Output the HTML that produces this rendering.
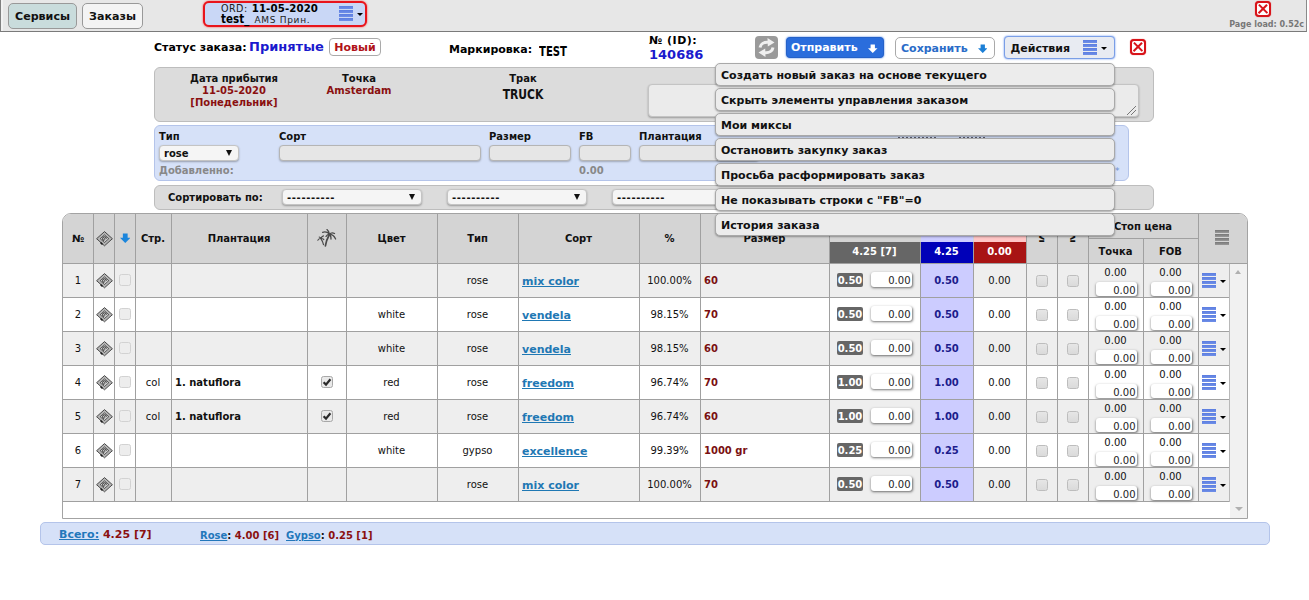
<!DOCTYPE html>
<html lang="ru"><head><meta charset="utf-8"><title>Заказ 140686</title>
<style>
*{box-sizing:border-box}
html,body{margin:0;padding:0;background:#fff;width:1309px;height:600px;overflow:hidden}
body{font-family:"DejaVu Sans","Liberation Sans",sans-serif;font-size:11px;color:#000;position:relative}
.abs{position:absolute}
b,.b{font-weight:bold}
#topbar{left:0;top:0;width:1307px;height:32px;background:#e7e7e7;border-bottom:1px solid #7a7a7a;border-right:1px solid #8a8a8a;border-left:1px solid #808080;box-shadow:inset 2px 0 0 #f2f2f2}
.tbtn{top:2.500px;height:26px;border:1px solid #999;border-radius:5px;font-weight:bold;font-size:11.1px;line-height:25px;text-align:center;color:#111}
#ordtab{left:203px;top:1px;width:164px;height:26px;border:2px solid #e8141c;border-radius:6px;background:#c9d7f6;box-shadow:0 0 2px #f33}
.menuic{width:14px;height:15px;background:repeating-linear-gradient(#5b7de0 0,#6f8fe8 3px,transparent 3px,transparent 4px)}
.arr{width:0;height:0;border-left:3px solid transparent;border-right:3px solid transparent;border-top:3.600px solid #000}
.xic{width:16px;height:16px;border:2px solid #d8141a;border-radius:4px;background:#fff;box-shadow:0 0 1px #d33}
.xic:before,.xic:after{content:"";position:absolute;left:5.100px;top:0.250px;width:1.800px;height:11.500px;background:#d8141a;transform:rotate(45deg)}
.xic:after{transform:rotate(-45deg)}
.panel{background:#dcdcdc;border:1px solid #bdbdbd;border-radius:6px}
.inp{background:#e6e6e6;border:1px solid #b5b5b5;border-radius:4px;box-shadow:0 1px 2px rgba(0,0,0,.25);height:16px}
.sel{background:#f5f5f5;border:1px solid #c4c4c4;border-radius:4px;box-shadow:0 1px 2px rgba(0,0,0,.3);height:16px;font-size:10px;font-weight:bold;line-height:15.500px;padding-left:4px;color:#111}
.sel i{position:absolute;right:6px;top:4px;width:0;height:0;border-left:3px solid transparent;border-right:3px solid transparent;border-top:6px solid #111}
.lbl{font-weight:bold;font-size:10px;color:#111}
.mi{left:715px;width:400px;height:22.500px;background:#ececec;border:1px solid #a9a9a9;border-radius:5px;box-shadow:0 1px 2px rgba(0,0,0,.35);font-weight:bold;font-size:11px;line-height:23px;padding-left:5px;color:#111}

.hd{font-weight:bold;font-size:10px;line-height:12px;text-align:center;color:#111}
.c{font-size:10px;line-height:12px;text-align:center;color:#111}
.cb{width:12px;height:12px;background:linear-gradient(#e6e6e6,#dadada);border:1px solid #bdbdbd;border-radius:2.500px}
.lnk{font-weight:bold;font-size:11px;line-height:16px;color:#1f78b4;text-decoration:underline}
.bdg{width:26px;height:14px;background:#666;border-radius:2px;color:#fff;font-weight:bold;font-size:10px;line-height:15.500px;text-align:center;overflow:hidden}
.ti{width:41px;height:14.500px;background:#fff;border-radius:3px;box-shadow:0.500px 1px 2.500px rgba(0,0,0,.55);font-size:10px;line-height:17px;text-align:right;padding-right:1px;color:#222;overflow:hidden}
</style></head><body>
<div id="topbar" class="abs"></div>
<div class="abs tbtn" style="left:8px;width:69px;background:#c9dcdc">Сервисы</div>
<div class="abs tbtn" style="left:82px;width:61px;background:#f4f4f4">Заказы</div>
<div id="ordtab" class="abs"></div>
<div class="abs" style="left:221px;top:3px;font-size:9.600px;line-height:12px;color:#222;white-space:nowrap"><span style="letter-spacing:.45px">ORD:</span> <b style="font-size:10.200px;color:#000;letter-spacing:.12px;margin-left:1px">11-05-2020</b></div>
<div class="abs" style="left:221px;top:12px;font-size:11.500px;line-height:14px;color:#000;white-space:nowrap"><b style="font-family:'DejaVu Sans Condensed','DejaVu Sans',sans-serif">test_</b> <span style="font-size:9px;letter-spacing:.7px;color:#222;margin-left:1.500px">AMS Прин.</span></div>
<div class="abs menuic" style="left:339px;top:6px"></div>
<div class="abs arr" style="left:356.500px;top:12.500px"></div>
<div class="abs xic" style="left:1255px;top:1px"></div>
<div class="abs b" style="left:1200px;width:104px;text-align:right;top:20px;font-size:8px;line-height:10px;color:#777">Page load: 0.52с</div>

<!-- status line -->
<div class="abs b" style="left:154px;top:41px;font-size:11px;line-height:14px">Статус заказа:</div>
<div class="abs b" style="left:249px;top:39px;font-size:13px;line-height:16px;color:#1a1acd">Принятые</div>
<div class="abs b" style="left:329px;top:38px;width:52px;height:18px;border:1px solid #aaa;border-radius:4px;background:#fff;color:#b01218;font-size:11px;line-height:17px;text-align:center">Новый</div>
<div class="abs b" style="left:449px;top:43px;font-size:11px;line-height:14px">Маркировка:</div>
<div class="abs b" style="left:539px;top:42.500px;font-size:11px;line-height:14px;font-family:'DejaVu Sans Condensed','DejaVu Sans',sans-serif;transform:scale(1.02,1.3);transform-origin:0 0">TEST</div>
<div class="abs b" style="left:649px;top:34px;font-size:11px;letter-spacing:.5px;line-height:14px">№ (ID):</div>
<div class="abs b" style="left:649px;top:47px;font-size:13px;line-height:16px;color:#1a1acd">140686</div>
<div class="abs" style="left:755px;top:36px;width:23px;height:23px;background:#9a9a9a;border-radius:4px"></div>
<svg class="abs" style="left:755px;top:36px" width="23" height="23" viewBox="0 0 23 23"><g fill="none" stroke="#f0f0f0" stroke-width="3"><path d="M5 11.500C5.500 8 9 6 13 6.300"/><path d="M18 11.500C17.500 15 14 17 10 16.700"/></g><path d="M12.500 2L19.500 6.500 12.800 10.500zM10.500 21L3.500 16.500 10.200 12.500z" fill="#f0f0f0"/></svg>
<div class="abs b" style="left:786px;top:37px;width:98px;height:21px;background:#2a6ddc;border:1px solid #2561c8;border-radius:4px;color:#fff;font-size:11px;line-height:20px;padding-left:4px;box-shadow:0 0 2px #2a6ddc">Отправить</div>
<svg class="abs" style="left:868px;top:44px" width="9.500" height="9.500" viewBox="0 0 11 11"><path d="M3 0.500h5v4.500h3L5.500 10.500 0 5h3z" fill="#fff"/></svg>
<div class="abs b" style="left:895px;top:36.500px;width:100px;height:22px;background:#fff;border:1px solid #aaa;border-radius:5px;color:#2a6cc8;font-size:11px;line-height:22px;padding-left:5px">Сохранить</div>
<svg class="abs" style="left:977.500px;top:43.500px" width="9.500" height="9.500" viewBox="0 0 11 11"><path d="M3 0.500h5v4.500h3L5.500 10.500 0 5h3z" fill="#1c7fd6"/></svg>
<div class="abs b" style="left:1004px;top:36px;width:111px;height:23px;background:#e8ebf2;border:1px solid #7a9ee6;border-radius:4px;color:#111;font-size:11px;line-height:23px;padding-left:5.500px;box-shadow:0 0 2px #5b8cf0">Действия</div>
<div class="abs menuic" style="left:1083px;top:40px"></div>
<div class="abs arr" style="left:1101px;top:46.500px"></div>
<div class="abs xic" style="left:1130px;top:39px"></div>

<!-- panel 1 -->
<div class="abs panel" style="left:154px;top:67px;width:1000px;height:54.500px"></div>
<div class="abs b" style="left:174px;top:73px;width:120px;text-align:center;font-size:10px;line-height:12px;color:#111">Дата прибытия<br><span style="color:#8a1010">11-05-2020<br>[Понедельник]</span></div>
<div class="abs b" style="left:299px;top:73px;width:120px;text-align:center;font-size:10px;line-height:12px;color:#111">Точка<br><span style="color:#8a1010">Amsterdam</span></div>
<div class="abs b" style="left:463px;top:73px;width:120px;text-align:center;font-size:10px;line-height:12px;color:#111">Трак<br><span style="display:inline-block;font-size:12px;line-height:18px;font-family:'DejaVu Sans Condensed','DejaVu Sans',sans-serif;transform:scaleY(1.2);transform-origin:50% 3px;position:relative;top:-1px">TRUCK</span></div>
<div class="abs" style="left:648px;top:84px;width:491px;height:33px;background:#ebebeb;border:1px solid #c4c4c4;border-radius:4px;box-shadow:0 1px 2px rgba(0,0,0,.3)"></div>
<svg class="abs" style="left:1126px;top:105px" width="11" height="11" viewBox="0 0 11 11"><path d="M10 1L1 10M10 5L5 10" stroke="#777" stroke-width="1" fill="none"/></svg>

<!-- panel 2 -->
<div class="abs" style="left:154px;top:125px;width:975px;height:55.500px;background:#d6e1f8;border:1px solid #b4c4ea;border-radius:6px"></div>
<div class="abs lbl" style="left:159px;top:131px;line-height:12px">Тип</div>
<div class="abs lbl" style="left:279px;top:131px;line-height:12px">Сорт</div>
<div class="abs lbl" style="left:489px;top:131px;line-height:12px">Размер</div>
<div class="abs lbl" style="left:579px;top:131px;line-height:12px">FB</div>
<div class="abs lbl" style="left:639px;top:131px;line-height:12px">Плантация</div>
<div class="abs sel" style="left:159px;top:145px;width:80px">rose<i></i></div>
<div class="abs inp" style="left:279px;top:145px;width:202px"></div>
<div class="abs inp" style="left:489px;top:145px;width:82px"></div>
<div class="abs inp" style="left:579px;top:145px;width:52px"></div>
<div class="abs inp" style="left:639px;top:145px;width:120px"></div>
<div class="abs lbl" style="left:159px;top:165px;line-height:12px;color:#888">Добавленно:</div>
<div class="abs lbl" style="left:579px;top:165px;line-height:12px;color:#888">0.00</div>
<div class="abs" style="left:898px;top:136.500px;width:40px;height:1.500px;background:repeating-linear-gradient(90deg,#334 0,#334 2px,transparent 2px,transparent 4px);opacity:.75"></div><div class="abs" style="left:959px;top:136.500px;width:27px;height:1.500px;background:repeating-linear-gradient(90deg,#334 0,#334 2px,transparent 2px,transparent 4px);opacity:.75"></div>
<div class="abs" style="left:1115px;top:166px;font-size:9px;color:#7090d0">*</div>

<!-- panel 3 -->
<div class="abs panel" style="left:154px;top:185px;width:1000px;height:25px"></div>
<div class="abs lbl" style="left:168px;top:192px;line-height:12px">Сортировать по:</div>
<div class="abs sel" style="left:282px;top:189px;width:140px"><span style="letter-spacing:.65px">----------</span><i></i></div>
<div class="abs sel" style="left:447px;top:189px;width:140px"><span style="letter-spacing:.65px">----------</span><i></i></div>
<div class="abs sel" style="left:612px;top:189px;width:140px"><span style="letter-spacing:.65px">----------</span><i></i></div>

<!--TBL--><div class="abs" id="tbl" style="left:62px;top:213px;width:1186px;height:306px;border:1px solid #a3a3a3;border-radius:9px 9px 0 0;background:#fff;overflow:hidden">
<div class="abs" style="left:0;top:0;width:1186px;height:50px;background:#d4d4d4"></div>
<div class="abs" style="left:767px;top:28px;width:90px;height:21px;background:#666"></div>
<div class="abs" style="left:858px;top:0px;width:52px;height:28px;background:#ccccff"></div>
<div class="abs" style="left:858px;top:28px;width:52px;height:21px;background:#0000b8"></div>
<div class="abs" style="left:911px;top:0px;width:52px;height:28px;background:#ffc6c6"></div>
<div class="abs" style="left:911px;top:28px;width:52px;height:21px;background:#a81414"></div>
<div class="abs hd" style="left:0px;width:30px;top:19px;">№</div>
<div class="abs hd" style="left:72px;width:36px;top:19px;">Стр.</div>
<div class="abs hd" style="left:108px;width:136px;top:19px;">Плантация</div>
<div class="abs hd" style="left:283px;width:91px;top:19px;">Цвет</div>
<div class="abs hd" style="left:374px;width:81px;top:19px;">Тип</div>
<div class="abs hd" style="left:455px;width:121px;top:19px;">Сорт</div>
<div class="abs hd" style="left:576px;width:61px;top:19px;">%</div>
<div class="abs hd" style="left:637px;width:129px;top:19px;">Размер</div>
<div class="abs hd" style="left:766px;width:91px;top:32px;color:#fff">4.25 [7]</div>
<div class="abs hd" style="left:857px;width:53px;top:32px;color:#fff">4.25</div>
<div class="abs hd" style="left:910px;width:53px;top:32px;color:#fff">0.00</div>
<div class="abs hd" style="left:963px;width:31px;top:19px;font-size:9px;transform:scale(.88,1.6);transform-origin:50% 75%">≤</div>
<div class="abs hd" style="left:994px;width:31px;top:19px;font-size:9px;transform:scale(.88,1.6);transform-origin:50% 75%">≥</div>
<div class="abs hd" style="left:1025px;width:110px;top:7px;">Стоп цена</div>
<div class="abs hd" style="left:1025px;width:55px;top:32px;">Точка</div>
<div class="abs hd" style="left:1080px;width:55px;top:32px;">FOB</div>
<svg class="abs" style="left:32.5px;top:16.5px" width="17" height="16" viewBox="0 0 17 16"><path d="M8.500 0.600L16.400 7.700 8.500 14.800 0.600 7.700z" fill="#b4b4b4" stroke="#2a2a2a" stroke-width="0.800"/><path d="M8.500 3.900L12.800 7.700 8.500 11.500 4.200 7.700z" fill="#cfcfcf" stroke="#2a2a2a" stroke-width="0.700"/><path d="M8.300 9.600A1.900 1.900 0 1 1 10.400 7.700" fill="none" stroke="#1a1a1a" stroke-width="0.900"/><circle cx="8.700" cy="7.900" r="0.700" fill="#1a1a1a"/><path d="M4.500 11.500L6.500 13.500" stroke="#1a1a1a" stroke-width="1.600"/></svg>
<svg class="abs" style="left:56.7px;top:18.5px" width="10.500" height="10.500" viewBox="0 0 11 11"><path d="M3 0.500h5v4.500h3L5.500 10.500 0 5h3z" fill="#1c86dc"/></svg>
<svg class="abs" style="left:254px;top:15px" width="20" height="18" viewBox="0 0 20 18"><g fill="none" stroke="#4a4a4a" stroke-linecap="round"><path d="M8.400 16.800C9 13 10.500 9 12.400 5.500" stroke-width="1.700"/><path d="M12.400 5.200C10.500 3 8 2.600 5.600 3.300M12.400 5.200C12 3 11.200 1.500 10 0.600M12.400 5.200C14 3.600 15.800 3.600 17.500 4.500M12.400 5.200C15.500 5.500 17.500 7.500 18.600 10M12.400 5.200C14 7 14.200 8.500 13.900 10M12.400 5.200C10.500 5.500 9.500 6.500 9 7.500" stroke-width="1.300"/><path d="M6.500 15.700C6 13.500 5.200 11.500 3.900 9.600" stroke-width="1.200"/><path d="M3.900 9.500C2.800 9.500 1.500 10 0.800 11.200M3.900 9.500C3.500 8.500 3 8.200 2.200 8M3.900 9.500C4.500 8 5.500 7.200 6.500 6.900M3.900 9.500C5.200 9.300 6.300 9.800 6.800 10.600" stroke-width="1.100"/></g></svg>
<div class="abs" style="left:1152px;top:16px;width:14px;height:15px;background:repeating-linear-gradient(#777 0,#999 3px,transparent 3px,transparent 4px)"></div>
<div class="abs" style="left:0;top:50px;width:1167px;height:33px;background:#eeeeee"></div>
<div class="abs" style="left:858px;top:50px;width:52px;height:33px;background:#ccccff"></div>
<div class="abs c" style="left:0px;width:30px;top:61px;">1</div>
<svg class="abs" style="left:32.5px;top:58.5px" width="17" height="16" viewBox="0 0 17 16"><path d="M8.500 0.600L16.400 7.700 8.500 14.800 0.600 7.700z" fill="#b4b4b4" stroke="#2a2a2a" stroke-width="0.800"/><path d="M8.500 3.900L12.800 7.700 8.500 11.500 4.200 7.700z" fill="#d2d2d2" stroke="#2a2a2a" stroke-width="0.700"/><path d="M8.300 9.600A1.900 1.900 0 1 1 10.400 7.700" fill="none" stroke="#1a1a1a" stroke-width="0.900"/><circle cx="8.700" cy="7.900" r="0.700" fill="#1a1a1a"/><path d="M4.500 11.500L6.500 13.500" stroke="#1a1a1a" stroke-width="1.600"/></svg>
<div class="abs cb" style="left:56px;top:59.69999999999999px;background:#ededed;border-color:#d2d2d2"></div>
<div class="abs c" style="left:374px;width:81px;top:61px;">rose</div>
<div class="abs lnk" style="left:459px;top:59.5px">mix color</div>
<div class="abs c" style="left:576px;width:61px;top:61px;">100.00%</div>
<div class="abs c" style="left:641px;width:125px;top:61px;text-align:left;font-weight:bold;color:#7a1010">60</div>
<div class="abs bdg" style="left:774px;top:59px">0.50</div>
<div class="abs ti" style="left:807.5px;top:58px">0.00</div>
<div class="abs c" style="left:857px;width:53px;top:61px;font-weight:bold;color:#1c1c8c">0.50</div>
<div class="abs c" style="left:910px;width:53px;top:61px;">0.00</div>
<div class="abs cb" style="left:973px;top:60.5px"></div>
<div class="abs cb" style="left:1004px;top:60.5px"></div>
<div class="abs c" style="left:1025px;width:55px;top:53px;">0.00</div>
<div class="abs c" style="left:1080px;width:55px;top:53px;">0.00</div>
<div class="abs ti" style="left:1032.5px;top:68px;height:14px;line-height:17px">0.00</div>
<div class="abs ti" style="left:1087.5px;top:68px;height:14px;line-height:17px">0.00</div>
<div class="abs menuic" style="left:1139px;top:59px"></div>
<div class="abs arr" style="left:1156.7px;top:66px"></div>
<div class="abs" style="left:0px;top:83px;width:1167px;height:1px;background:#a0a0a0"></div>
<div class="abs" style="left:0;top:84px;width:1167px;height:33px;background:#ffffff"></div>
<div class="abs" style="left:858px;top:84px;width:52px;height:33px;background:#ccccff"></div>
<div class="abs c" style="left:0px;width:30px;top:95px;">2</div>
<svg class="abs" style="left:32.5px;top:92.5px" width="17" height="16" viewBox="0 0 17 16"><path d="M8.500 0.600L16.400 7.700 8.500 14.800 0.600 7.700z" fill="#b4b4b4" stroke="#2a2a2a" stroke-width="0.800"/><path d="M8.500 3.900L12.800 7.700 8.500 11.500 4.200 7.700z" fill="#d2d2d2" stroke="#2a2a2a" stroke-width="0.700"/><path d="M8.300 9.600A1.900 1.900 0 1 1 10.400 7.700" fill="none" stroke="#1a1a1a" stroke-width="0.900"/><circle cx="8.700" cy="7.900" r="0.700" fill="#1a1a1a"/><path d="M4.500 11.500L6.500 13.500" stroke="#1a1a1a" stroke-width="1.600"/></svg>
<div class="abs cb" style="left:56px;top:93.69999999999999px;background:#ededed;border-color:#d2d2d2"></div>
<div class="abs c" style="left:283px;width:91px;top:95px;">white</div>
<div class="abs c" style="left:374px;width:81px;top:95px;">rose</div>
<div class="abs lnk" style="left:459px;top:93.5px">vendela</div>
<div class="abs c" style="left:576px;width:61px;top:95px;">98.15%</div>
<div class="abs c" style="left:641px;width:125px;top:95px;text-align:left;font-weight:bold;color:#7a1010">70</div>
<div class="abs bdg" style="left:774px;top:93px">0.50</div>
<div class="abs ti" style="left:807.5px;top:92px">0.00</div>
<div class="abs c" style="left:857px;width:53px;top:95px;font-weight:bold;color:#1c1c8c">0.50</div>
<div class="abs c" style="left:910px;width:53px;top:95px;">0.00</div>
<div class="abs cb" style="left:973px;top:94.5px"></div>
<div class="abs cb" style="left:1004px;top:94.5px"></div>
<div class="abs c" style="left:1025px;width:55px;top:87px;">0.00</div>
<div class="abs c" style="left:1080px;width:55px;top:87px;">0.00</div>
<div class="abs ti" style="left:1032.5px;top:102px;height:14px;line-height:17px">0.00</div>
<div class="abs ti" style="left:1087.5px;top:102px;height:14px;line-height:17px">0.00</div>
<div class="abs menuic" style="left:1139px;top:93px"></div>
<div class="abs arr" style="left:1156.7px;top:100px"></div>
<div class="abs" style="left:0px;top:117px;width:1167px;height:1px;background:#a0a0a0"></div>
<div class="abs" style="left:0;top:118px;width:1167px;height:33px;background:#eeeeee"></div>
<div class="abs" style="left:858px;top:118px;width:52px;height:33px;background:#ccccff"></div>
<div class="abs c" style="left:0px;width:30px;top:129px;">3</div>
<svg class="abs" style="left:32.5px;top:126.5px" width="17" height="16" viewBox="0 0 17 16"><path d="M8.500 0.600L16.400 7.700 8.500 14.800 0.600 7.700z" fill="#b4b4b4" stroke="#2a2a2a" stroke-width="0.800"/><path d="M8.500 3.900L12.800 7.700 8.500 11.500 4.200 7.700z" fill="#d2d2d2" stroke="#2a2a2a" stroke-width="0.700"/><path d="M8.300 9.600A1.900 1.900 0 1 1 10.400 7.700" fill="none" stroke="#1a1a1a" stroke-width="0.900"/><circle cx="8.700" cy="7.900" r="0.700" fill="#1a1a1a"/><path d="M4.500 11.500L6.500 13.500" stroke="#1a1a1a" stroke-width="1.600"/></svg>
<div class="abs cb" style="left:56px;top:127.69999999999999px;background:#ededed;border-color:#d2d2d2"></div>
<div class="abs c" style="left:283px;width:91px;top:129px;">white</div>
<div class="abs c" style="left:374px;width:81px;top:129px;">rose</div>
<div class="abs lnk" style="left:459px;top:127.5px">vendela</div>
<div class="abs c" style="left:576px;width:61px;top:129px;">98.15%</div>
<div class="abs c" style="left:641px;width:125px;top:129px;text-align:left;font-weight:bold;color:#7a1010">60</div>
<div class="abs bdg" style="left:774px;top:127px">0.50</div>
<div class="abs ti" style="left:807.5px;top:126px">0.00</div>
<div class="abs c" style="left:857px;width:53px;top:129px;font-weight:bold;color:#1c1c8c">0.50</div>
<div class="abs c" style="left:910px;width:53px;top:129px;">0.00</div>
<div class="abs cb" style="left:973px;top:128.5px"></div>
<div class="abs cb" style="left:1004px;top:128.5px"></div>
<div class="abs c" style="left:1025px;width:55px;top:121px;">0.00</div>
<div class="abs c" style="left:1080px;width:55px;top:121px;">0.00</div>
<div class="abs ti" style="left:1032.5px;top:136px;height:14px;line-height:17px">0.00</div>
<div class="abs ti" style="left:1087.5px;top:136px;height:14px;line-height:17px">0.00</div>
<div class="abs menuic" style="left:1139px;top:127px"></div>
<div class="abs arr" style="left:1156.7px;top:134px"></div>
<div class="abs" style="left:0px;top:151px;width:1167px;height:1px;background:#a0a0a0"></div>
<div class="abs" style="left:0;top:152px;width:1167px;height:33px;background:#ffffff"></div>
<div class="abs" style="left:858px;top:152px;width:52px;height:33px;background:#ccccff"></div>
<div class="abs c" style="left:0px;width:30px;top:163px;">4</div>
<svg class="abs" style="left:32.5px;top:160.5px" width="17" height="16" viewBox="0 0 17 16"><path d="M8.500 0.600L16.400 7.700 8.500 14.800 0.600 7.700z" fill="#b4b4b4" stroke="#2a2a2a" stroke-width="0.800"/><path d="M8.500 3.900L12.800 7.700 8.500 11.500 4.200 7.700z" fill="#d2d2d2" stroke="#2a2a2a" stroke-width="0.700"/><path d="M8.300 9.600A1.900 1.900 0 1 1 10.400 7.700" fill="none" stroke="#1a1a1a" stroke-width="0.900"/><circle cx="8.700" cy="7.900" r="0.700" fill="#1a1a1a"/><path d="M4.500 11.500L6.500 13.500" stroke="#1a1a1a" stroke-width="1.600"/></svg>
<div class="abs cb" style="left:56px;top:161.7px;background:#ededed;border-color:#d2d2d2"></div>
<div class="abs c" style="left:72px;width:36px;top:163px;">col</div>
<div class="abs c" style="left:112px;width:132px;top:163px;text-align:left;font-weight:bold">1. natuflora</div>
<div class="abs cb" style="left:258px;top:162px;background:#e9e9e9;border-color:#a8a8a8"></div>
<svg class="abs" style="left:259px;top:163px" width="10" height="10" viewBox="0 0 10 10"><path d="M1.600 5.200L4 7.600 8.400 2.200" fill="none" stroke="#2a2a2a" stroke-width="2.200"/></svg>
<div class="abs c" style="left:283px;width:91px;top:163px;">red</div>
<div class="abs c" style="left:374px;width:81px;top:163px;">rose</div>
<div class="abs lnk" style="left:459px;top:161.5px">freedom</div>
<div class="abs c" style="left:576px;width:61px;top:163px;">96.74%</div>
<div class="abs c" style="left:641px;width:125px;top:163px;text-align:left;font-weight:bold;color:#7a1010">70</div>
<div class="abs bdg" style="left:774px;top:161px">1.00</div>
<div class="abs ti" style="left:807.5px;top:160px">0.00</div>
<div class="abs c" style="left:857px;width:53px;top:163px;font-weight:bold;color:#1c1c8c">1.00</div>
<div class="abs c" style="left:910px;width:53px;top:163px;">0.00</div>
<div class="abs cb" style="left:973px;top:162.5px"></div>
<div class="abs cb" style="left:1004px;top:162.5px"></div>
<div class="abs c" style="left:1025px;width:55px;top:155px;">0.00</div>
<div class="abs c" style="left:1080px;width:55px;top:155px;">0.00</div>
<div class="abs ti" style="left:1032.5px;top:170px;height:14px;line-height:17px">0.00</div>
<div class="abs ti" style="left:1087.5px;top:170px;height:14px;line-height:17px">0.00</div>
<div class="abs menuic" style="left:1139px;top:161px"></div>
<div class="abs arr" style="left:1156.7px;top:168px"></div>
<div class="abs" style="left:0px;top:185px;width:1167px;height:1px;background:#a0a0a0"></div>
<div class="abs" style="left:0;top:186px;width:1167px;height:33px;background:#eeeeee"></div>
<div class="abs" style="left:858px;top:186px;width:52px;height:33px;background:#ccccff"></div>
<div class="abs c" style="left:0px;width:30px;top:197px;">5</div>
<svg class="abs" style="left:32.5px;top:194.5px" width="17" height="16" viewBox="0 0 17 16"><path d="M8.500 0.600L16.400 7.700 8.500 14.800 0.600 7.700z" fill="#b4b4b4" stroke="#2a2a2a" stroke-width="0.800"/><path d="M8.500 3.900L12.800 7.700 8.500 11.500 4.200 7.700z" fill="#d2d2d2" stroke="#2a2a2a" stroke-width="0.700"/><path d="M8.300 9.600A1.900 1.900 0 1 1 10.400 7.700" fill="none" stroke="#1a1a1a" stroke-width="0.900"/><circle cx="8.700" cy="7.900" r="0.700" fill="#1a1a1a"/><path d="M4.500 11.500L6.500 13.500" stroke="#1a1a1a" stroke-width="1.600"/></svg>
<div class="abs cb" style="left:56px;top:195.7px;background:#ededed;border-color:#d2d2d2"></div>
<div class="abs c" style="left:72px;width:36px;top:197px;">col</div>
<div class="abs c" style="left:112px;width:132px;top:197px;text-align:left;font-weight:bold">1. natuflora</div>
<div class="abs cb" style="left:258px;top:196px;background:#e9e9e9;border-color:#a8a8a8"></div>
<svg class="abs" style="left:259px;top:197px" width="10" height="10" viewBox="0 0 10 10"><path d="M1.600 5.200L4 7.600 8.400 2.200" fill="none" stroke="#2a2a2a" stroke-width="2.200"/></svg>
<div class="abs c" style="left:283px;width:91px;top:197px;">red</div>
<div class="abs c" style="left:374px;width:81px;top:197px;">rose</div>
<div class="abs lnk" style="left:459px;top:195.5px">freedom</div>
<div class="abs c" style="left:576px;width:61px;top:197px;">96.74%</div>
<div class="abs c" style="left:641px;width:125px;top:197px;text-align:left;font-weight:bold;color:#7a1010">60</div>
<div class="abs bdg" style="left:774px;top:195px">1.00</div>
<div class="abs ti" style="left:807.5px;top:194px">0.00</div>
<div class="abs c" style="left:857px;width:53px;top:197px;font-weight:bold;color:#1c1c8c">1.00</div>
<div class="abs c" style="left:910px;width:53px;top:197px;">0.00</div>
<div class="abs cb" style="left:973px;top:196.5px"></div>
<div class="abs cb" style="left:1004px;top:196.5px"></div>
<div class="abs c" style="left:1025px;width:55px;top:189px;">0.00</div>
<div class="abs c" style="left:1080px;width:55px;top:189px;">0.00</div>
<div class="abs ti" style="left:1032.5px;top:204px;height:14px;line-height:17px">0.00</div>
<div class="abs ti" style="left:1087.5px;top:204px;height:14px;line-height:17px">0.00</div>
<div class="abs menuic" style="left:1139px;top:195px"></div>
<div class="abs arr" style="left:1156.7px;top:202px"></div>
<div class="abs" style="left:0px;top:219px;width:1167px;height:1px;background:#a0a0a0"></div>
<div class="abs" style="left:0;top:220px;width:1167px;height:33px;background:#ffffff"></div>
<div class="abs" style="left:858px;top:220px;width:52px;height:33px;background:#ccccff"></div>
<div class="abs c" style="left:0px;width:30px;top:231px;">6</div>
<svg class="abs" style="left:32.5px;top:228.5px" width="17" height="16" viewBox="0 0 17 16"><path d="M8.500 0.600L16.400 7.700 8.500 14.800 0.600 7.700z" fill="#b4b4b4" stroke="#2a2a2a" stroke-width="0.800"/><path d="M8.500 3.900L12.800 7.700 8.500 11.500 4.200 7.700z" fill="#d2d2d2" stroke="#2a2a2a" stroke-width="0.700"/><path d="M8.300 9.600A1.900 1.900 0 1 1 10.400 7.700" fill="none" stroke="#1a1a1a" stroke-width="0.900"/><circle cx="8.700" cy="7.900" r="0.700" fill="#1a1a1a"/><path d="M4.500 11.500L6.500 13.500" stroke="#1a1a1a" stroke-width="1.600"/></svg>
<div class="abs cb" style="left:56px;top:229.7px;background:#ededed;border-color:#d2d2d2"></div>
<div class="abs c" style="left:283px;width:91px;top:231px;">white</div>
<div class="abs c" style="left:374px;width:81px;top:231px;">gypso</div>
<div class="abs lnk" style="left:459px;top:229.5px">excellence</div>
<div class="abs c" style="left:576px;width:61px;top:231px;">99.39%</div>
<div class="abs c" style="left:641px;width:125px;top:231px;text-align:left;font-weight:bold;color:#7a1010">1000 gr</div>
<div class="abs bdg" style="left:774px;top:229px">0.25</div>
<div class="abs ti" style="left:807.5px;top:228px">0.00</div>
<div class="abs c" style="left:857px;width:53px;top:231px;font-weight:bold;color:#1c1c8c">0.25</div>
<div class="abs c" style="left:910px;width:53px;top:231px;">0.00</div>
<div class="abs cb" style="left:973px;top:230.5px"></div>
<div class="abs cb" style="left:1004px;top:230.5px"></div>
<div class="abs c" style="left:1025px;width:55px;top:223px;">0.00</div>
<div class="abs c" style="left:1080px;width:55px;top:223px;">0.00</div>
<div class="abs ti" style="left:1032.5px;top:238px;height:14px;line-height:17px">0.00</div>
<div class="abs ti" style="left:1087.5px;top:238px;height:14px;line-height:17px">0.00</div>
<div class="abs menuic" style="left:1139px;top:229px"></div>
<div class="abs arr" style="left:1156.7px;top:236px"></div>
<div class="abs" style="left:0px;top:253px;width:1167px;height:1px;background:#a0a0a0"></div>
<div class="abs" style="left:0;top:254px;width:1167px;height:33px;background:#eeeeee"></div>
<div class="abs" style="left:858px;top:254px;width:52px;height:33px;background:#ccccff"></div>
<div class="abs c" style="left:0px;width:30px;top:265px;">7</div>
<svg class="abs" style="left:32.5px;top:262.5px" width="17" height="16" viewBox="0 0 17 16"><path d="M8.500 0.600L16.400 7.700 8.500 14.800 0.600 7.700z" fill="#b4b4b4" stroke="#2a2a2a" stroke-width="0.800"/><path d="M8.500 3.900L12.800 7.700 8.500 11.500 4.200 7.700z" fill="#d2d2d2" stroke="#2a2a2a" stroke-width="0.700"/><path d="M8.300 9.600A1.900 1.900 0 1 1 10.400 7.700" fill="none" stroke="#1a1a1a" stroke-width="0.900"/><circle cx="8.700" cy="7.900" r="0.700" fill="#1a1a1a"/><path d="M4.500 11.500L6.500 13.500" stroke="#1a1a1a" stroke-width="1.600"/></svg>
<div class="abs cb" style="left:56px;top:263.7px;background:#ededed;border-color:#d2d2d2"></div>
<div class="abs c" style="left:374px;width:81px;top:265px;">rose</div>
<div class="abs lnk" style="left:459px;top:263.5px">mix color</div>
<div class="abs c" style="left:576px;width:61px;top:265px;">100.00%</div>
<div class="abs c" style="left:641px;width:125px;top:265px;text-align:left;font-weight:bold;color:#7a1010">70</div>
<div class="abs bdg" style="left:774px;top:263px">0.50</div>
<div class="abs ti" style="left:807.5px;top:262px">0.00</div>
<div class="abs c" style="left:857px;width:53px;top:265px;font-weight:bold;color:#1c1c8c">0.50</div>
<div class="abs c" style="left:910px;width:53px;top:265px;">0.00</div>
<div class="abs cb" style="left:973px;top:264.5px"></div>
<div class="abs cb" style="left:1004px;top:264.5px"></div>
<div class="abs c" style="left:1025px;width:55px;top:257px;">0.00</div>
<div class="abs c" style="left:1080px;width:55px;top:257px;">0.00</div>
<div class="abs ti" style="left:1032.5px;top:272px;height:14px;line-height:17px">0.00</div>
<div class="abs ti" style="left:1087.5px;top:272px;height:14px;line-height:17px">0.00</div>
<div class="abs menuic" style="left:1139px;top:263px"></div>
<div class="abs arr" style="left:1156.7px;top:270px"></div>
<div class="abs" style="left:0px;top:287px;width:1167px;height:1px;background:#a0a0a0"></div>
<div class="abs" style="left:1167px;top:50px;width:18px;height:256px;background:#f1f1f1"></div>
<div class="abs" style="left:0px;top:49px;width:1185px;height:1px;background:#a0a0a0"></div>
<div class="abs" style="left:30px;top:0px;width:1px;height:288px;background:#a0a0a0"></div>
<div class="abs" style="left:51px;top:0px;width:1px;height:288px;background:#a0a0a0"></div>
<div class="abs" style="left:72px;top:0px;width:1px;height:288px;background:#a0a0a0"></div>
<div class="abs" style="left:108px;top:0px;width:1px;height:288px;background:#a0a0a0"></div>
<div class="abs" style="left:244px;top:0px;width:1px;height:288px;background:#a0a0a0"></div>
<div class="abs" style="left:283px;top:0px;width:1px;height:288px;background:#a0a0a0"></div>
<div class="abs" style="left:374px;top:0px;width:1px;height:288px;background:#a0a0a0"></div>
<div class="abs" style="left:455px;top:0px;width:1px;height:288px;background:#a0a0a0"></div>
<div class="abs" style="left:576px;top:0px;width:1px;height:288px;background:#a0a0a0"></div>
<div class="abs" style="left:637px;top:0px;width:1px;height:288px;background:#a0a0a0"></div>
<div class="abs" style="left:766px;top:0px;width:1px;height:288px;background:#a0a0a0"></div>
<div class="abs" style="left:857px;top:28px;width:1px;height:260px;background:#a0a0a0"></div>
<div class="abs" style="left:910px;top:28px;width:1px;height:260px;background:#a0a0a0"></div>
<div class="abs" style="left:963px;top:0px;width:1px;height:288px;background:#a0a0a0"></div>
<div class="abs" style="left:994px;top:0px;width:1px;height:288px;background:#a0a0a0"></div>
<div class="abs" style="left:1025px;top:0px;width:1px;height:288px;background:#a0a0a0"></div>
<div class="abs" style="left:1135px;top:0px;width:1px;height:288px;background:#a0a0a0"></div>
<div class="abs" style="left:1080px;top:25px;width:1px;height:263px;background:#a0a0a0"></div>
<div class="abs" style="left:1025px;top:24px;width:110px;height:1px;background:#a0a0a0"></div>
<div class="abs" style="left:1166px;top:50px;width:1px;height:238px;background:#b8b8b8"></div>
<div class="abs" style="left:1171.5px;top:56px;width:0;height:0;border-left:3.700px solid transparent;border-right:3.700px solid transparent;border-bottom:4px solid #b0b0b0"></div>
<div class="abs" style="left:1171.5px;top:293px;width:0;height:0;border-left:4px solid transparent;border-right:4px solid transparent;border-top:4px solid #b0b0b0"></div>
</div><!--/TBL-->

<!-- footer -->
<div class="abs" style="left:40px;top:522px;width:1230px;height:23px;background:#d6e1f8;border:1px solid #b4c4ea;border-radius:5px"></div>
<div class="abs b" style="left:59px;top:527.500px;font-size:11px;line-height:14px;color:#8a1010"><span style="color:#2277bb;text-decoration:underline">Всего:</span> 4.25 [7]</div>
<div class="abs b" style="left:200px;top:528.500px;font-size:10px;line-height:13px;color:#8a1010"><span style="color:#2277bb;text-decoration:underline">Rose</span><span style="color:#111">:</span> 4.00 [6] &nbsp;<span style="color:#2277bb;text-decoration:underline">Gypso</span><span style="color:#111">:</span> 0.25 [1]</div>

<!-- dropdown -->
<div class="abs mi" style="top:63px">Создать новый заказ на основе текущего</div>
<div class="abs mi" style="top:88px">Скрыть элементы управления заказом</div>
<div class="abs mi" style="top:113px">Мои миксы</div>
<div class="abs mi" style="top:138px">Остановить закупку заказ</div>
<div class="abs mi" style="top:163px">Просьба расформировать заказ</div>
<div class="abs mi" style="top:188px">Не показывать строки с "FB"=0</div>
<div class="abs mi" style="top:213px">История заказа</div>
</body></html>
